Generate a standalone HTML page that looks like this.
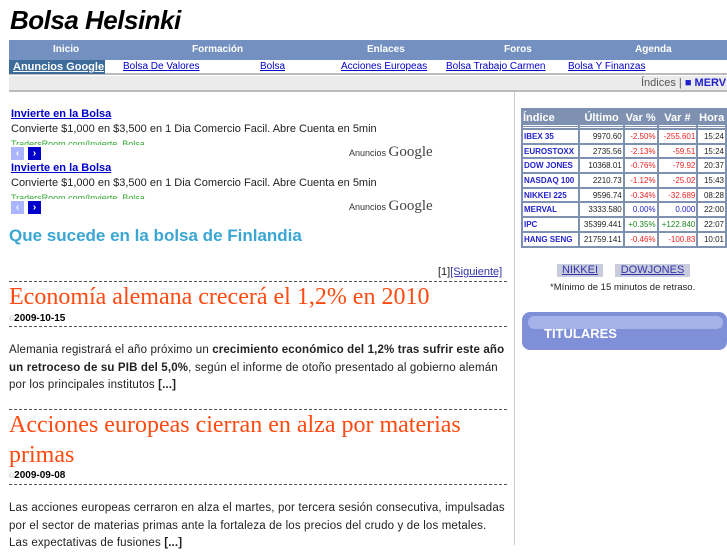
<!DOCTYPE html>
<html><head><meta charset="utf-8"><style>
*{margin:0;padding:0;box-sizing:border-box}
body{width:727px;height:545px;overflow:hidden;background:#fff;font-family:"Liberation Sans",sans-serif;position:relative;color:#222}
.a{position:absolute;white-space:nowrap}
h1{position:absolute;left:10px;top:5px;font-size:26px;font-style:italic;font-weight:bold;color:#000;letter-spacing:-0.5px}
.nav{position:absolute;left:9px;top:40px;width:718px;height:20px;background:#7390c0;color:#fff;font-size:10px;font-weight:bold}
.nav span{position:absolute;top:4px}
.row2{position:absolute;left:9px;top:60px;width:718px;height:15px;font-size:10px;border-bottom:2px solid #bbb}
.row2 a{position:absolute;top:1px;color:#00c;text-decoration:underline}
.ag{position:absolute;left:0;top:0;width:96px;height:14px;background:#3d6b9a;color:#fff;font-weight:bold;font-size:11px;padding:1px 0 0 4px;text-decoration:underline}
.gray{position:absolute;left:9px;top:76px;width:718px;height:16px;background:#ebebeb;border-bottom:2px solid #bbb;font-size:11px}
.vl{position:absolute;left:514px;top:92px;width:1px;height:453px;background:#ccc}
.adt{font-size:11px;font-weight:bold;color:#00c;text-decoration:underline}
.adb{font-size:11px;color:#222}
.adu{font-size:9px;color:#3a3;height:6px;overflow:hidden}
.btn{position:absolute;width:13px;height:13px;color:#fff;font-size:10px;font-weight:bold;text-align:center;line-height:13px}
.goo{font-size:9px;color:#333}.goo b{font-family:"Liberation Serif",serif;font-size:15px;font-weight:normal;color:#444}
.h2{font-family:"Liberation Serif",serif;color:#ff4a10;font-size:24px}
.dash{position:absolute;left:9px;width:498px;border-top:1px dashed #555}
.p{position:absolute;left:9px;width:503px;font-size:11.5px;letter-spacing:0.15px;line-height:17.5px;white-space:normal}
.p.h2{font-size:24px;line-height:30px;width:500px;letter-spacing:0}
.date{font-size:10px;font-weight:bold;color:#000}
table{position:absolute;left:521px;top:108px;width:206px;background:#7f91b0;border-collapse:separate;border-spacing:2px;font-size:8px}
th{color:#fff;font-size:11px;font-weight:bold;text-align:center;height:18px;border-bottom:3px double #fff}
td{background:#fff;height:12.7px;text-align:right;padding:0 1px;color:#222}
td.n{text-align:left;color:#22c;font-weight:bold}
.r{color:#e22}.g{color:#282}.b{color:#22c}
</style></head><body>
<h1>Bolsa Helsinki</h1>
<div class="nav"><span style="left:44px">Inicio</span><span style="left:183px">Formación</span><span style="left:358px">Enlaces</span><span style="left:495px">Foros</span><span style="left:626px">Agenda</span></div>
<div class="row2"><div class="ag">Anuncios Google</div><a style="left:114px">Bolsa De Valores</a><a style="left:251px">Bolsa</a><a style="left:332px">Acciones Europeas</a><a style="left:437px">Bolsa Trabajo Carmen</a><a style="left:559px">Bolsa Y Finanzas</a></div>
<div class="gray"><span class="a" style="left:632px;top:1px;color:#555">Índices | <b style="color:#22c">■ MERV</b></span></div>
<div class="vl"></div>

<div class="a adt" style="left:11px;top:108px">Invierte en la Bolsa</div>
<div class="a adb" style="left:11px;top:123px">Convierte $1,000 en $3,500 en 1 Dia Comercio Facil. Abre Cuenta en 5min</div>
<div class="a adu" style="left:11px;top:139px">TradersRoom.com/Invierte_Bolsa</div>
<div class="btn" style="left:11px;top:147px;background:#aab4ff">‹</div><div class="btn" style="left:28px;top:147px;background:#00c">›</div>
<div class="a goo" style="left:349px;top:144px">Anuncios <b>Google</b></div>

<div class="a adt" style="left:11px;top:162px">Invierte en la Bolsa</div>
<div class="a adb" style="left:11px;top:177px">Convierte $1,000 en $3,500 en 1 Dia Comercio Facil. Abre Cuenta en 5min</div>
<div class="a adu" style="left:11px;top:193px">TradersRoom.com/Invierte_Bolsa</div>
<div class="btn" style="left:11px;top:201px;background:#aab4ff">‹</div><div class="btn" style="left:28px;top:201px;background:#00c">›</div>
<div class="a goo" style="left:349px;top:198px">Anuncios <b>Google</b></div>

<div class="a" style="left:9px;top:226px;font-size:17px;font-weight:bold;color:#3aa6d4">Que sucede en la bolsa de Finlandia</div>
<div class="a" style="left:438px;top:266px;font-size:11px;color:#222">[1]<span style="color:#33a;text-decoration:underline">[Siguiente]</span></div>
<div class="dash" style="top:281px"></div>
<div class="a h2" style="left:9px;top:284px">Economía alemana crecerá el 1,2% en 2010</div>
<div class="a date" style="left:9px;top:313px"><span style="color:#bbb;font-weight:normal;font-size:7px">©</span>2009-10-15</div>
<div class="dash" style="top:326px"></div>
<div class="p" style="top:342px">Alemania registrará el año próximo un <b>crecimiento económico del 1,2% tras sufrir este año un retroceso de su PIB del 5,0%</b>, según el informe de otoño presentado al gobierno alemán por los principales institutos <b>[...]</b></div>
<div class="dash" style="top:409px"></div>
<div class="p h2" style="top:410px">Acciones europeas cierran en alza por materias primas</div>
<div class="a date" style="left:9px;top:470px"><span style="color:#bbb;font-weight:normal;font-size:7px">©</span>2009-09-08</div>
<div class="dash" style="top:484px"></div>
<div class="p" style="top:500px">Las acciones europeas cerraron en alza el martes, por tercera sesión consecutiva, impulsadas por el sector de materias primas ante la fortaleza de los precios del crudo y de los metales.<br>Las expectativas de fusiones <b>[...]</b></div>

<table>
<tr><th style="text-align:left">Índice</th><th>Último</th><th>Var %</th><th>Var #</th><th>Hora</th></tr>
<tr><td class="n">IBEX 35</td><td>9970.60</td><td class="r">-2.50%</td><td class="r">-255.601</td><td>15:24</td></tr>
<tr><td class="n">EUROSTOXX</td><td>2735.56</td><td class="r">-2.13%</td><td class="r">-59.51</td><td>15:24</td></tr>
<tr><td class="n">DOW JONES</td><td>10368.01</td><td class="r">-0.76%</td><td class="r">-79.92</td><td>20:37</td></tr>
<tr><td class="n">NASDAQ 100</td><td>2210.73</td><td class="r">-1.12%</td><td class="r">-25.02</td><td>15:43</td></tr>
<tr><td class="n">NIKKEI 225</td><td>9596.74</td><td class="r">-0.34%</td><td class="r">-32.689</td><td>08:28</td></tr>
<tr><td class="n">MERVAL</td><td>3333.580</td><td class="b">0.00%</td><td class="b">0.000</td><td>22:00</td></tr>
<tr><td class="n">IPC</td><td>35399.441</td><td class="g">+0.35%</td><td class="g">+122.840</td><td>22:07</td></tr>
<tr><td class="n">HANG SENG</td><td>21759.141</td><td class="r">-0.46%</td><td class="r">-100.83</td><td>10:01</td></tr>
</table>
<div class="a" style="left:557px;top:264px;width:46px;height:13px;background:#c8ccdc;color:#33a;font-size:11px;text-align:center;text-decoration:underline">NIKKEI</div>
<div class="a" style="left:615px;top:264px;width:75px;height:13px;background:#c8ccdc;color:#33a;font-size:11px;text-align:center;text-decoration:underline">DOWJONES</div>
<div class="a" style="left:550px;top:282px;font-size:9.5px;color:#222">*Mínimo de 15 minutos de retraso.</div>
<div class="a" style="left:522px;top:312px;width:205px;height:38px;border-radius:8px;background:#7f90d8"><div style="position:absolute;left:6px;top:4px;right:4px;height:13px;border-radius:7px;background:#a6b2ea"></div><span style="position:absolute;left:22px;top:14px;color:#fff;font-weight:bold;font-size:13px">TITULARES</span></div>
</body></html>
